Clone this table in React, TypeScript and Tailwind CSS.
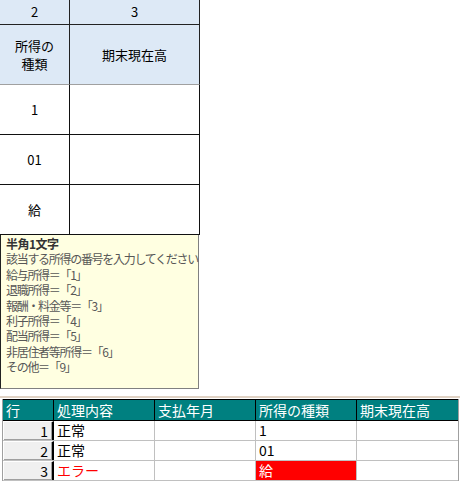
const jp = "font-['MS_UI_Gothic','Noto_Sans_CJK_JP',sans-serif]"

const tipLines = [
  '該当する所得の番号を入力してください',
  '給与所得＝「1」',
  '退職所得＝「2」',
  '報酬・料金等＝「3」',
  '利子所得＝「4」',
  '配当所得＝「5」',
  '非居住者等所得＝「6」',
  'その他＝「9」',
]

type Row = { no: number; status: string; error?: boolean; kind: string }

const rows: Row[] = [
  { no: 1, status: '正常', kind: '1' },
  { no: 2, status: '正常', kind: '01' },
  { no: 3, status: 'エラー', error: true, kind: '給' },
]

const cols = ['処理内容', '支払年月', '所得の種類', '期末現在高']

function InputTable() {
  return (
    <div className={`w-[200px] text-[13px] text-black ${jp}`}>
      <div className="grid grid-cols-[70px_130px] bg-[#dde9f6]">
        <div className="h-[25px] flex items-center justify-center border-r border-b border-[#222]">2</div>
        <div className="h-[25px] flex items-center justify-center border-r border-b border-[#222]">3</div>
        <div className="h-[60px] flex flex-col items-center justify-center text-center border-r border-b border-b-[#a0a0a0] border-r-[#222]">
          <span className="leading-[18px]">所得の</span>
          <span className="leading-[18px]">種類</span>
        </div>
        <div className="h-[60px] flex items-center justify-center border-r border-b border-b-[#a0a0a0] border-r-[#222]">
          期末現在高
        </div>
      </div>
      <div className="grid grid-cols-[70px_130px] bg-white">
        {['1', '01', '給'].map((v) => (
          <div key={v} className="contents">
            <div className="h-[50px] flex items-center justify-center border-r border-b border-[#111]">{v}</div>
            <div className="h-[50px] border-r border-b border-[#111]" />
          </div>
        ))}
      </div>
    </div>
  )
}

function Tooltip() {
  return (
    <div
      className={`w-[199px] h-[155px] -mt-px bg-[#ffffe1] border-l border-l-[#222] border-r border-r-[#808080] border-b border-b-[#808080] pl-[5px] pt-[2px] text-[12px] tracking-[-1.3px] leading-[15.4px] text-[#575757] ${jp}`}
    >
      <div className="font-bold text-[#333] tracking-[-0.5px]">半角1文字</div>
      {tipLines.map((l) => (
        <div key={l} className="whitespace-nowrap">
          {l}
        </div>
      ))}
    </div>
  )
}

function Grid() {
  return (
    <div className={`mt-[7px] border-t-2 border-[#e0d2c4] pt-px pl-[2px] text-[14px] ${jp}`}>
      <div className="w-[457px] border-l border-[#a0a0a0] border-r">
        <div className="grid grid-cols-[51px_101px_101px_101px_101px] bg-[#008080] text-white border-t border-b border-black">
          <div className="h-[20px] pl-[3px] leading-[20px] border-r border-black">行</div>
          {cols.map((c) => (
            <div key={c} className="h-[20px] pl-[3px] leading-[20px] border-r border-black last:border-r-0">
              {c}
            </div>
          ))}
        </div>
        {rows.map((r) => (
          <div key={r.no} className="grid grid-cols-[51px_101px_101px_101px_101px] h-[20px] bg-white border-b border-[#c0c0c0]">
            <div className="bg-[#f0f0f0] border-t border-l border-white border-r-2 border-r-black text-right pr-[4px] leading-[18px] shadow-[inset_-1px_-1px_0_#a0a0a0]">
              {r.no}
            </div>
            <div className={`pl-[3px] leading-[19px] border-r border-[#c0c0c0] ${r.error ? 'text-[#ff0000]' : 'text-black'}`}>
              {r.status}
            </div>
            <div className="border-r border-[#c0c0c0]" />
            <div
              className={`pl-[3px] leading-[19px] border-r border-[#c0c0c0] ${r.error ? 'bg-[#ff0000] text-white' : 'text-black'}`}
            >
              {r.kind}
            </div>
            <div />
          </div>
        ))}
      </div>
    </div>
  )
}

export default function App() {
  return (
    <div className="w-[460px] h-[483px] bg-white overflow-hidden">
      <InputTable />
      <Tooltip />
      <Grid />
    </div>
  )
}
